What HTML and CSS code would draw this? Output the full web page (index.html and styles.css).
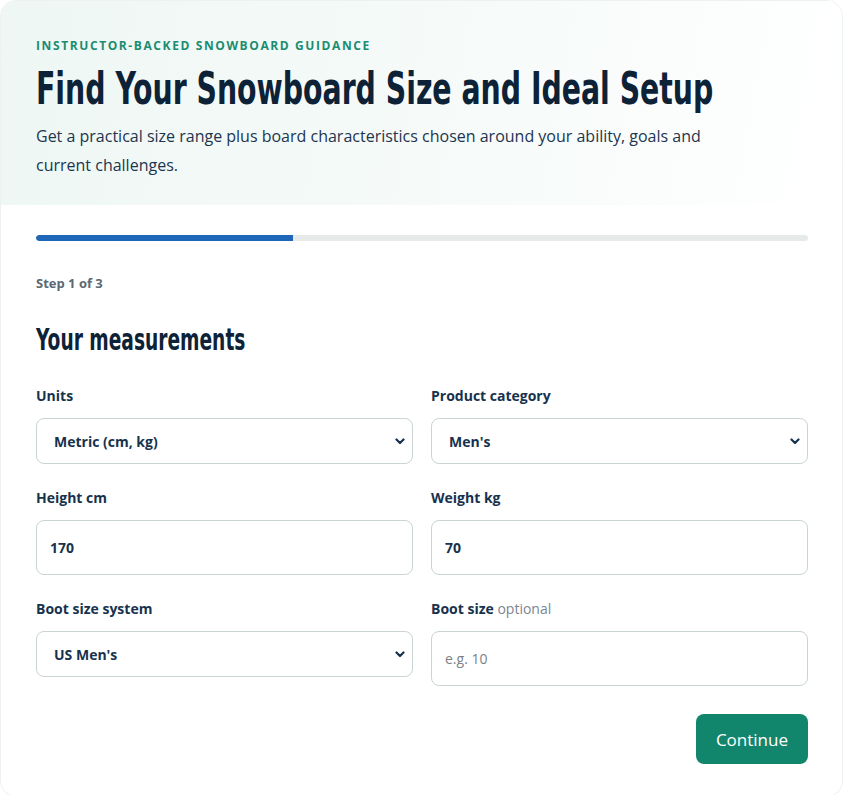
FILE: index.html
```html
<!DOCTYPE html>
<html lang="en">
<head>
    <meta charset="UTF-8">
    <meta name="viewport" content="width=device-width, initial-scale=1.0">
    <title>Snowboard Size Finder</title>
    <link rel="stylesheet" href="styles.css">
</head>
<body>
    <div class="card">
        <div class="hero">
            <div class="eyebrow">Instructor-backed snowboard guidance</div>
            <h1 class="title"><span class="narrow">Find Your Snowboard Size and Ideal Setup</span></h1>
            <p class="lead">Get a practical size range plus board characteristics chosen around your ability, goals and current challenges.</p>
        </div>

        <div class="wizard">
            <div class="progress">
                <div class="progress-fill" style="width: 33.33%"></div>
            </div>

            <div class="step-label">Step 1 of 3</div>
            <h2 class="section-title"><span class="narrow">Your measurements</span></h2>

            <div class="form-grid">
                <div class="field">
                    <label class="field-label" for="units">Units</label>
                    <div class="select-wrap">
                        <select id="units" class="control select">
                            <option>Metric (cm, kg)</option>
                            <option>Imperial (in, lb)</option>
                        </select>
                        <svg class="chevron" width="10" height="7" viewBox="0 0 10 7" fill="none" stroke="#17324d" stroke-width="2.2" stroke-linecap="round" stroke-linejoin="round">
                            <polyline points="1.5,1.5 5,5 8.5,1.5"></polyline>
                        </svg>
                    </div>
                </div>

                <div class="field">
                    <label class="field-label" for="category">Product category</label>
                    <div class="select-wrap">
                        <select id="category" class="control select">
                            <option>Men's</option>
                            <option>Women's</option>
                            <option>Kids'</option>
                        </select>
                        <svg class="chevron" width="10" height="7" viewBox="0 0 10 7" fill="none" stroke="#17324d" stroke-width="2.2" stroke-linecap="round" stroke-linejoin="round">
                            <polyline points="1.5,1.5 5,5 8.5,1.5"></polyline>
                        </svg>
                    </div>
                </div>

                <div class="field">
                    <label class="field-label" for="height">Height cm</label>
                    <input id="height" class="control input" type="text" value="170">
                </div>

                <div class="field">
                    <label class="field-label" for="weight">Weight kg</label>
                    <input id="weight" class="control input" type="text" value="70">
                </div>

                <div class="field">
                    <label class="field-label" for="boot-system">Boot size system</label>
                    <div class="select-wrap">
                        <select id="boot-system" class="control select">
                            <option>US Men's</option>
                            <option>US Women's</option>
                            <option>EU</option>
                            <option>UK</option>
                        </select>
                        <svg class="chevron" width="10" height="7" viewBox="0 0 10 7" fill="none" stroke="#17324d" stroke-width="2.2" stroke-linecap="round" stroke-linejoin="round">
                            <polyline points="1.5,1.5 5,5 8.5,1.5"></polyline>
                        </svg>
                    </div>
                </div>

                <div class="field">
                    <label class="field-label" for="boot-size">Boot size <span class="optional">optional</span></label>
                    <input id="boot-size" class="control input" type="text" placeholder="e.g. 10">
                </div>
            </div>

            <div class="actions">
                <button class="btn-primary">Continue</button>
            </div>
        </div>
    </div>
</body>
</html>
```

FILE: styles.css
```css
* {
    margin: 0;
    padding: 0;
    box-sizing: border-box;
}

body {
    font-family: 'Open Sans', 'Noto Sans', sans-serif;
    background: #ffffff;
    color: #17324d;
}

.card {
    background: #ffffff;
    border: 1px solid #edf1f1;
    border-radius: 16px;
    overflow: hidden;
}

/* Hero header */
.hero {
    padding: 38px 35px 25px;
    background: linear-gradient(100deg, #eef7f4 0%, #f7fbfa 60%, #ffffff 100%);
}

.eyebrow {
    font-size: 12px;
    line-height: 14px;
    font-weight: 700;
    letter-spacing: 1.6px;
    text-transform: uppercase;
    color: #1a8c70;
    margin-bottom: 12px;
}

/* condensed display headings */
.narrow {
    display: inline-block;
    white-space: nowrap;
    transform-origin: left center;
}

.title {
    font-family: 'DejaVu Sans Condensed', 'DejaVu Sans', sans-serif;
    font-size: 45px;
    line-height: 48px;
    font-weight: 700;
    color: #0d2237;
    white-space: nowrap;
}

.title .narrow {
    transform: scaleX(0.70);
}

.lead {
    margin-top: 9px;
    font-size: 16px;
    line-height: 29px;
    color: #1c3550;
    max-width: 700px;
}

/* Wizard */
.wizard {
    padding: 30px 34px 32px 35px;
}

.progress {
    height: 6px;
    background: #e6ebea;
    border-radius: 3px;
    overflow: hidden;
}

.progress-fill {
    height: 100%;
    background: #1e66b8;
    border-radius: 3px 0 0 3px;
}

.step-label {
    margin-top: 33px;
    font-size: 13px;
    line-height: 18px;
    font-weight: 700;
    color: #5b6873;
}

.section-title {
    margin-top: 31px;
    font-family: 'DejaVu Sans Condensed', 'DejaVu Sans', sans-serif;
    font-size: 30px;
    line-height: 34px;
    font-weight: 700;
    color: #0d2237;
    white-space: nowrap;
}

.section-title .narrow {
    transform: scaleX(0.69);
}

.form-grid {
    margin-top: 29px;
    display: grid;
    grid-template-columns: 1fr 1fr;
    column-gap: 18px;
    row-gap: 24px;
    align-items: start;
}

.field {
    display: flex;
    flex-direction: column;
    gap: 12px;
}

.field-label {
    font-size: 14px;
    line-height: 20px;
    font-weight: 700;
    color: #17324d;
}

.optional {
    font-weight: 400;
    color: #7b8691;
}

.control {
    width: 100%;
    font-family: inherit;
    font-size: 14px;
    font-weight: 700;
    color: #17324d;
    background: #ffffff;
    border: 1px solid #c9d4d3;
    border-radius: 8px;
    outline: none;
}

.select-wrap {
    position: relative;
}

.select {
    height: 46px;
    padding: 0 36px 0 17px;
    appearance: none;
    -webkit-appearance: none;
}

.chevron {
    position: absolute;
    right: 8px;
    top: 20px;
    pointer-events: none;
}

.input {
    height: 55px;
    padding: 0 13px;
}

.input::placeholder {
    color: #7b8088;
    font-weight: 400;
}

/* Actions */
.actions {
    display: flex;
    justify-content: flex-end;
    margin-top: 28px;
}

.btn-primary {
    height: 50px;
    padding: 0 20px;
    border: none;
    border-radius: 8px;
    background: #12866c;
    color: #ffffff;
    font-family: inherit;
    font-size: 17px;
    font-weight: 500;
    cursor: pointer;
}

.btn-primary:hover {
    background: #0f755e;
}
```
